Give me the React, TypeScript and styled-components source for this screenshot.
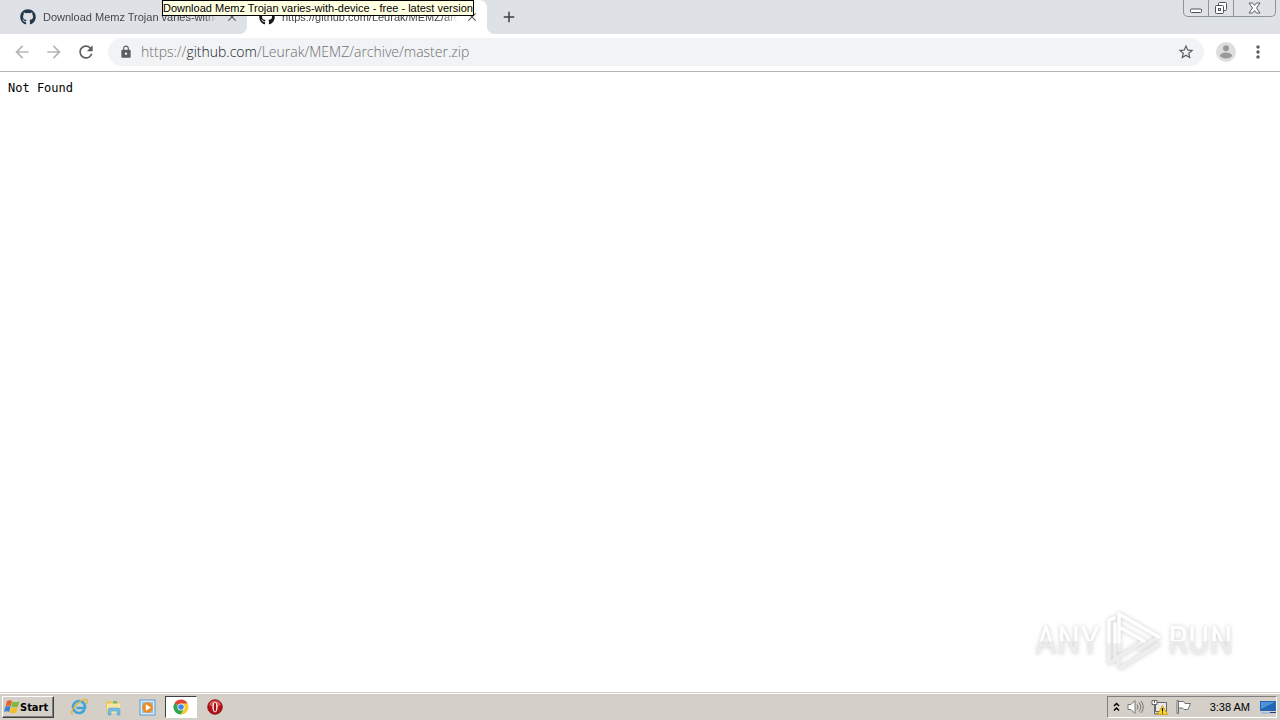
import React from "react";
import styled, { createGlobalStyle } from "styled-components";
import { FaGithub } from "react-icons/fa";
import {
  MdArrowBack,
  MdArrowForward,
  MdRefresh,
  MdLock,
  MdStarBorder,
  MdMoreVert,
  MdAdd,
  MdClose,
} from "react-icons/md";

const GlobalStyle = createGlobalStyle`
  * { box-sizing: border-box; }
  body { margin: 0; background: #fff; font-family: "Liberation Sans", sans-serif; font-size: 11px; color: #000; }
  button, input { font: inherit; color: inherit; }
`;

const Desktop = styled.div`
  display: flex;
  flex-direction: column;
  min-height: 100vh;
`;

const TabStrip = styled.header`
  position: relative;
  display: flex;
  align-items: stretch;
  height: 34px;
  background: #dee1e6;
`;

const Tab = styled.div<{ $active?: boolean }>`
  position: relative;
  display: flex;
  align-items: center;
  gap: 7px;
  width: ${(p) => (p.$active ? 240 : 247)}px;
  padding: 0 8px 0 ${(p) => (p.$active ? 12 : 20)}px;
  border-radius: 8px 8px 0 0;
  background: ${(p) => (p.$active ? "#fff" : "transparent")};
  color: #45494d;

  &::before,
  &::after {
    content: ${(p) => (p.$active ? '""' : "none")};
    position: absolute;
    bottom: 0;
    width: 8px;
    height: 8px;
  }
  &::before {
    left: -8px;
    background: radial-gradient(circle at 0 0, transparent 8px, #fff 8px);
  }
  &::after {
    right: -8px;
    background: radial-gradient(circle at 100% 0, transparent 8px, #fff 8px);
  }
`;

const TabTitle = styled.span`
  flex: 1;
  overflow: hidden;
  white-space: nowrap;
  line-height: 16px;
  mask-image: linear-gradient(to right, #000 92%, transparent);
`;

const PlainButton = styled.button`
  display: flex;
  align-items: center;
  justify-content: center;
  padding: 0;
  border: 0;
  background: none;
`;

const TabClose = styled(PlainButton)`
  width: 14px;
  height: 14px;
  color: #5a5e63;
`;

const NewTab = styled(PlainButton)`
  width: 28px;
  margin-left: 8px;
  color: #3c4043;
`;

const WindowControls = styled.div`
  display: flex;
  height: 17px;
  margin: 0 4px 0 auto;
  border: 1px solid #8d939f;
  border-top: 0;
  border-radius: 0 0 5px 5px;
`;

const WindowButton = styled(PlainButton)<{ $width: number }>`
  width: ${(p) => p.$width}px;
  & + & {
    border-left: 1px solid #8d939f;
  }
`;

const Tooltip = styled.div`
  position: absolute;
  top: 0;
  left: 162px;
  height: 16px;
  border: 1px solid #000;
  background: #ffffe1;
  line-height: 15px;
  white-space: nowrap;
`;

const Toolbar = styled.nav`
  display: flex;
  align-items: center;
  height: 38px;
  padding: 0 6px 1px 6px;
  border-bottom: 1px solid #b4b6b8;
`;

const ToolButton = styled(PlainButton)<{ $muted?: boolean }>`
  width: 32px;
  height: 28px;
  color: ${(p) => (p.$muted ? "#b4b6b8" : "#5a5e63")};
`;

const AddressBar = styled.form`
  flex: 1;
  display: flex;
  align-items: center;
  height: 28px;
  margin: 0 6px;
  padding: 0 9px 0 11px;
  gap: 8px;
  border-radius: 14px;
  background: #f1f3f4;
  color: #5a5e63;
`;

const Address = styled.a`
  flex: 1;
  font-family: "Open Sans", "DejaVu Sans Condensed", sans-serif;
  font-weight: 300;
  font-size: 14px;
  line-height: 20px;
  color: #6b6f73;
  text-decoration: none;
`;

const Host = styled.span`
  color: #202124;
`;

const Page = styled.main`
  position: relative;
  flex: 1;
  padding: 8px;
`;

const Message = styled.pre`
  margin: 0;
  font: 12px/16px "DejaVu Sans Mono", monospace;
`;

const Watermark = styled.div`
  position: absolute;
  right: 47px;
  bottom: 19px;
  display: flex;
  align-items: center;
  gap: 5px;
  filter: drop-shadow(0 0 2px #ccc);
`;

const WatermarkWord = styled.span`
  font-family: "Roboto Condensed", "Liberation Sans Narrow", sans-serif;
  font-size: 38px;
  line-height: 64px;
  color: transparent;
  background: linear-gradient(#fff 50%, #ececec 50%);
  background-clip: text;
`;

const Taskbar = styled.footer`
  display: flex;
  align-items: center;
  height: 28px;
  padding: 2px 3px 1px 2px;
  border-top: 1px solid #d4d0c8;
  background: #d4d0c8;
  box-shadow: inset 0 1px #fff;
`;

const StartButton = styled.button`
  display: flex;
  align-items: center;
  width: 52px;
  height: 22px;
  margin-right: 9px;
  padding: 0 1px;
  border: 1px solid;
  border-color: #fff #404040 #404040 #fff;
  background: #d4d0c8;
  box-shadow: inset -1px -1px #808080;
  font-family: "DejaVu Sans Condensed", "DejaVu Sans", sans-serif;
  font-weight: bold;
  white-space: nowrap;
`;

const TaskButton = styled(PlainButton)<{ $pressed?: boolean }>`
  width: 32px;
  height: 22px;
  margin-right: 2px;
  border: 1px solid;
  border-color: ${(p) => (p.$pressed ? "#404040 #fff #fff #404040" : "transparent")};
  background: ${(p) => (p.$pressed ? "#fff" : "none")};
`;

const Tray = styled.div`
  display: flex;
  align-items: center;
  gap: 7px;
  height: 22px;
  margin-left: auto;
  padding: 0 0 0 5px;
  border: 1px solid;
  border-color: #808080 #fff #fff #808080;
`;

const Clock = styled.time`
  margin: 0 3px 0 11px;
  line-height: 16px;
`;

const WindowsFlag = () => (
  <svg width="16" height="16" viewBox="0 0 16 16">
    <path d="M3 2Q5.500 0.500 8 2L6.700 7.200Q4 6 1.500 7.200Z" fill="#e8612c" />
    <path d="M8.500 2.500Q11.500 4 15.500 2.300L14 7.500Q10.500 9 7.200 7.600Z" fill="#7fb93c" />
    <path d="M1.300 7.700Q4 6.500 6.600 7.700L5.200 13Q2.500 11.700 0 13Z" fill="#3d86cf" />
    <path d="M7.100 8.200Q10.300 9.600 13.800 8.100L12.300 13.500Q9 15 5.800 13.500Z" fill="#f6bd27" />
  </svg>
);

const ExplorerIcon = () => (
  <svg width="18" height="18" viewBox="0 0 18 18">
    <path d="M14.500 11.500A6 6 0 1 1 15 8.500L15 10H6.500" fill="none" stroke="#3fa3dd" strokeWidth="2.600" />
    <path d="M4.500 8.500A4.500 4.500 0 0 1 13 7" fill="none" stroke="#8fd2f2" strokeWidth="1" />
    <path d="M2.500 16.500C-1 13 10 1 16 1.500C18 2 17 4.500 16 6" fill="none" stroke="#e5b537" strokeWidth="1.400" />
  </svg>
);

const FolderIcon = () => (
  <svg width="17" height="17" viewBox="0 0 17 17">
    <path d="M1 2h5l1 1.500h8V14H1z" fill="#e8c65f" />
    <path d="M2 4.500h13v9.500H2z" fill="#f8e6a0" />
    <path d="M8 2h4v2.500H8z" fill="#7db86c" />
    <path d="M3 11q0-2 2-2h8q2 0 2 2v5h-3v-4H6v4H3z" fill="#75bce2" stroke="#4c97c5" strokeWidth="0.500" />
  </svg>
);

const PlayerIcon = () => (
  <svg width="17" height="17" viewBox="0 0 17 17">
    <rect x="1" y="1" width="15" height="15" fill="#d6eaf8" stroke="#5b9bd0" />
    <rect x="3" y="3" width="11" height="11" fill="#8fc3ea" />
    <circle cx="8.500" cy="8.500" r="5.200" fill="#f38a1d" />
    <path d="M6.800 5.300L12 8.500L6.800 11.700Z" fill="#fff" />
  </svg>
);

const ChromeIcon = () => (
  <svg width="16" height="16" viewBox="0 0 16 16">
    <path d="M8 8L1.500 4.200A7.500 7.500 0 0 1 14.500 4.200Z" fill="#e04434" />
    <path d="M8 8L1.500 4.200A7.500 7.500 0 0 0 8 15.500L11 10Z" fill="#36a351" />
    <path d="M8 4.500H14.600A7.500 7.500 0 0 1 8 15.500L11.500 9Z" fill="#fbc924" />
    <circle cx="8" cy="8" r="3.600" fill="#fff" />
    <circle cx="8" cy="8" r="2.800" fill="#4586ea" />
  </svg>
);

const OperaIcon = () => (
  <svg width="16" height="16" viewBox="0 0 16 16">
    <circle cx="8" cy="8" r="7.300" fill="#b81218" stroke="#7c090c" strokeWidth="0.800" />
    <path d="M2 6A6.300 6.300 0 0 1 14 6Q8 9 2 6Z" fill="#da5555" />
    <ellipse cx="8" cy="8" rx="2.600" ry="5.300" fill="#fff" />
    <ellipse cx="8" cy="8" rx="1.200" ry="4.600" fill="#a90e14" />
  </svg>
);

const ChevronsUp = () => (
  <svg width="7" height="10" viewBox="0 0 7 10" fill="none" stroke="#000" strokeWidth="1.500">
    <path d="M1 4L3.500 1.500L6 4M1 8.500L3.500 6L6 8.500" />
  </svg>
);

const SpeakerIcon = () => (
  <svg width="17" height="16" viewBox="0 0 17 16" fill="none" stroke="#77777a">
    <path d="M1 5.500h3L8 1.500v13L4 10.500H1z" fill="#fff" />
    <path d="M10 5.500q2 2.500 0 5M12 3.500q3.500 4.500 0 9M14 2q4.500 6 0 12" />
  </svg>
);

const NetworkIcon = () => (
  <svg width="17" height="17" viewBox="0 0 17 17">
    <path d="M4.500 3.500h11v9h-11z" fill="#e8e9eb" stroke="#666" />
    <path d="M6 14.500h8" stroke="#666" />
    <path d="M1 1.500h5v4H1z" fill="#fff" stroke="#666" />
    <path d="M3.500 1v3M3.500 5.500V15h3" fill="none" stroke="#666" />
    <path d="M11.500 6.500L16.500 15.500H6.500Z" fill="#ffd92e" stroke="#c79500" strokeWidth="0.800" />
    <path d="M11.500 9v3.500M11.500 13.500v1" stroke="#000" strokeWidth="1.200" />
  </svg>
);

const FlagIcon = () => (
  <svg width="17" height="16" viewBox="0 0 17 16" fill="#fff" stroke="#707070">
    <path d="M2 1.500h1.500v13H2z" />
    <path d="M3.500 2.500h5l1.500 2h5.500L13 10.500H9l-1.500-1.500h-4z" />
  </svg>
);

const DesktopIcon = () => (
  <svg width="16" height="14" viewBox="0 0 16 14">
    <path d="M0 1h16v10H0z" fill="#2465b4" />
    <path d="M1 2h14L1 9z" fill="#4f92d8" />
    <path d="M1 12h9v2H1z" fill="#a8bed8" />
    <path d="M10 12h6v1h-6z" fill="#183c75" />
  </svg>
);

const ProfileIcon = () => (
  <svg width="20" height="20" viewBox="0 0 20 20">
    <circle cx="10" cy="10" r="10" fill="#dedede" />
    <circle cx="10" cy="6.200" r="3" fill="#999" />
    <ellipse cx="10" cy="13.500" rx="6" ry="3" fill="#999" />
  </svg>
);

const PlayLogo = () => (
  <svg
    width="58"
    height="62"
    viewBox="0 0 58 62"
    fill="none"
    stroke="#fff"
    strokeWidth="3.500"
    strokeLinejoin="round"
    strokeLinecap="round"
  >
    <path d="M4 32V53L10 50V32M14 32V40M52 28L34 39M39 31L13 47V55M54 34L16 58" stroke="#eee" />
    <path d="M14 32V4L54 27M9 8L4 10V32M10 32V14M14 17L39 31" />
  </svg>
);

export default function App() {
  return (
    <Desktop>
      <GlobalStyle />
      <TabStrip>
        <Tab>
          <FaGithub size={16} color="#24384a" />
          <TabTitle>Download Memz Trojan varies-with-device</TabTitle>
          <TabClose aria-label="Close tab"><MdClose size={14} /></TabClose>
        </Tab>
        <Tab $active>
          <FaGithub size={16} color="#16191c" />
          <TabTitle>https://github.com/Leurak/MEMZ/archive</TabTitle>
          <TabClose aria-label="Close tab"><MdClose size={14} /></TabClose>
        </Tab>
        <NewTab aria-label="New tab"><MdAdd size={18} /></NewTab>
        <WindowControls>
          <WindowButton $width={24} aria-label="Minimize">
            <svg width="13" height="16" fill="#fff" stroke="#4c515c">
              <rect x="0.500" y="9" width="11" height="3.500" rx="1" />
            </svg>
          </WindowButton>
          <WindowButton $width={25} aria-label="Restore">
            <svg width="14" height="16" fill="#fff" stroke="#4c515c">
              <rect x="4.500" y="2.500" width="8" height="8" rx="1" />
              <rect x="1.500" y="5.500" width="8" height="8" rx="1" />
              <rect x="4.500" y="8.500" width="2" height="2" />
            </svg>
          </WindowButton>
          <WindowButton $width={42} aria-label="Close">
            <svg width="13" height="16" fill="#fff" stroke="#4c515c" strokeWidth="0.900">
              <path d="M1 3h3.500l2 2.500l2-2.500H12L8.500 8L12 13H8.500l-2-2.500l-2 2.500H1L4.500 8z" />
            </svg>
          </WindowButton>
        </WindowControls>
        <Tooltip role="tooltip">Download Memz Trojan varies-with-device - free - latest version</Tooltip>
      </TabStrip>
      <Toolbar>
        <ToolButton $muted aria-label="Back"><MdArrowBack size={20} /></ToolButton>
        <ToolButton $muted aria-label="Forward"><MdArrowForward size={20} /></ToolButton>
        <ToolButton aria-label="Reload"><MdRefresh size={20} /></ToolButton>
        <AddressBar>
          <MdLock size={14} />
          <Address href="https://github.com/Leurak/MEMZ/archive/master.zip">
            https://<Host>github.com</Host>/Leurak/MEMZ/archive/master.zip
          </Address>
          <PlainButton type="button" aria-label="Bookmark"><MdStarBorder size={18} /></PlainButton>
        </AddressBar>
        <ToolButton aria-label="Profile"><ProfileIcon /></ToolButton>
        <ToolButton aria-label="Menu"><MdMoreVert size={20} /></ToolButton>
      </Toolbar>
      <Page>
        <Message>Not Found</Message>
        <Watermark>
          <WatermarkWord>ANY</WatermarkWord>
          <PlayLogo />
          <WatermarkWord>RUN</WatermarkWord>
        </Watermark>
      </Page>
      <Taskbar>
        <StartButton><WindowsFlag />Start</StartButton>
        <TaskButton aria-label="Internet Explorer"><ExplorerIcon /></TaskButton>
        <TaskButton aria-label="File Explorer"><FolderIcon /></TaskButton>
        <TaskButton aria-label="Media Player"><PlayerIcon /></TaskButton>
        <TaskButton $pressed aria-label="Chrome"><ChromeIcon /></TaskButton>
        <TaskButton aria-label="Opera"><OperaIcon /></TaskButton>
        <Tray>
          <ChevronsUp />
          <SpeakerIcon />
          <NetworkIcon />
          <FlagIcon />
          <Clock>3:38 AM</Clock>
          <DesktopIcon />
        </Tray>
      </Taskbar>
    </Desktop>
  );
}
